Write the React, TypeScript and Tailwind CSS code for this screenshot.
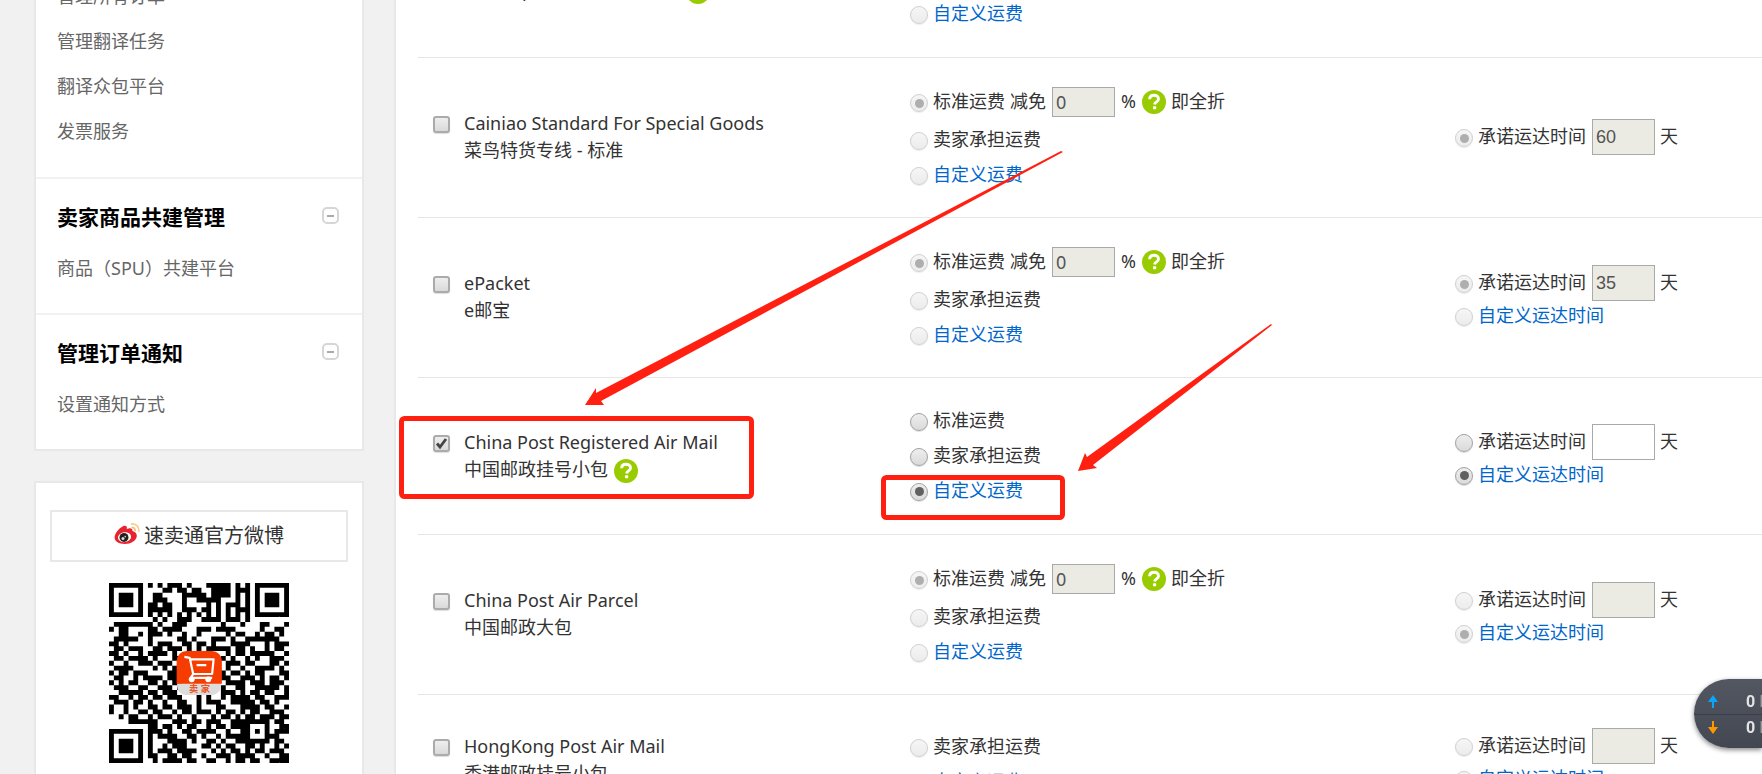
import React from "react";
import clsx from "clsx";

type Radio = {
  label: string;
  checked?: boolean;
  link?: boolean;
  discount?: string;
  days?: string;
};

type Method = {
  id: string;
  name: string;
  cnName: string;
  help?: boolean;
  active?: boolean;
  rowClass?: string;
  freightClass?: string;
  freight: Radio[];
  delivery: Radio[];
};

const standardFreight: Radio[] = [
  { label: "标准运费", checked: true, discount: "0" },
  { label: "卖家承担运费" },
  { label: "自定义运费", link: true },
];

const methods: Method[] = [
  {
    id: "tnt",
    name: "TNT Express",
    cnName: "TNT Express 全球快递服务",
    help: true,
    freight: standardFreight,
    delivery: [],
  },
  {
    id: "cainiao",
    name: "Cainiao Standard For Special Goods",
    cnName: "菜鸟特货专线 - 标准",
    freight: standardFreight,
    delivery: [{ label: "承诺运达时间", checked: true, days: "60" }],
  },
  {
    id: "epacket",
    name: "ePacket",
    cnName: "e邮宝",
    freight: standardFreight,
    delivery: [
      { label: "承诺运达时间", checked: true, days: "35" },
      { label: "自定义运达时间", link: true },
    ],
  },
  {
    id: "registered",
    name: "China Post Registered Air Mail",
    cnName: "中国邮政挂号小包",
    help: true,
    active: true,
    rowClass: "h-[157px]",
    freight: [
      { label: "标准运费" },
      { label: "卖家承担运费" },
      { label: "自定义运费", link: true, checked: true },
    ],
    delivery: [
      { label: "承诺运达时间", days: "" },
      { label: "自定义运达时间", link: true, checked: true },
    ],
  },
  {
    id: "parcel",
    name: "China Post Air Parcel",
    cnName: "中国邮政大包",
    freight: standardFreight,
    delivery: [
      { label: "承诺运达时间", days: "" },
      { label: "自定义运达时间", link: true, checked: true },
    ],
  },
  {
    id: "hongkong",
    name: "HongKong Post Air Mail",
    cnName: "香港邮政挂号小包",
    rowClass: "h-[132px]",
    freightClass: "pt-2",
    freight: [{ label: "卖家承担运费" }, { label: "自定义运费", link: true }],
    delivery: [
      { label: "承诺运达时间", days: "" },
      { label: "自定义运达时间", link: true },
    ],
  },
];

const qrRows = [
  "1111111010101110100011111010101111111",
  "1000001000011011011001111011101000001",
  "1011101001100001111101111010101011101",
  "1011101001110001001111100010101011101",
  "1011101011011001000010101110101011101",
  "1000001011111001110110101011101000001",
  "1111111010101010101010101010101111111",
  "0000000001010011100111101110100000000",
  "0111111110100111000000010001000110001",
  "1011000011011110001110111100000100110",
  "0011001011101001001000001011001011010",
  "0111110010000011010001110100111111100",
  "1101000010111001101101000111100010111",
  "0110111001101110101011111011010010110",
  "1101001011110100000000001011011111001",
  "0110111101000110000000010100101001110",
  "1001001110111000000000001110110001101",
  "0111100001010100000000001001001111010",
  "1011011100001110000000010110101100011",
  "0110010111101100000000011001110101101",
  "1010110011010110000000001111011101110",
  "0111001100111010000000010011001111101",
  "0011111011011100000000011101011011001",
  "1100101101101110001010010111101100111",
  "0111011010010011001011100111110110100",
  "1001010011011011101000110001111011001",
  "1001001101100101101110101101011001110",
  "0010110010111010010001011010110111011",
  "0000111111000111011011100111111110110",
  "0000000011011010110010110111100010011",
  "1111111011101001101111001001101010111",
  "1000001010111100110100101111100011100",
  "1011101010001111010011010011111110110",
  "1011101010010111000110101100110100101",
  "1011101010111011110001010110101101110",
  "1000001011001101100100111011110010011",
  "1111111001011110110011001011011001111",
];

// One unit square per black module; the centre stays free for the logo.
const qrPath = qrRows
  .map((row, y) =>
    row
      .split("")
      .map((cell, x) => (cell === "1" ? `M${x} ${y}h1v1h-1z` : ""))
      .join("")
  )
  .join("");

const QrCode = () => (
  <svg
    viewBox="0 0 37 37"
    className="size-[180px]"
    role="img"
    aria-label="QR code"
  >
    <path d={qrPath} fill="#000" />
    <path d="M14 20.6h9v.6a1.8 1.8 0 0 1-1.8 1.8h-5.4a1.8 1.8 0 0 1-1.8-1.8z" fill="#dcdcdc" />
    <path d="M16 14h5.2a2 2 0 0 1 2 2v4.7h-9.3V16a2 2 0 0 1 2-2z" fill="#f63c00" />
    <path
      d="M15.5 15.2l1.1.2.7 3.3h3.9l.3-3h-4.7M18 16.9h2M17.3 18.7l-.5.8h4.4"
      fill="none"
      stroke="#fff"
      strokeWidth=".45"
      strokeLinejoin="round"
    />
    <circle cx="17" cy="19.8" r=".6" fill="#fff" />
    <circle cx="20.4" cy="19.8" r=".6" fill="#fff" />
    <text
      x="18.6"
      y="22.5"
      fontSize="1.9"
      fontWeight="700"
      textAnchor="middle"
      fill="#f0521e"
    >
      卖 家
    </text>
  </svg>
);

const WeiboIcon = () => (
  <svg viewBox="0 0 27 22" className="mb-1 h-[22px] w-[27px]" aria-hidden="true">
    <path
      d="M9 3.200C11.500 2 13.500 3 12.800 6c3-1.300 6.200-1 5.600 2 2.700.8 4.600 2.400 4.400 5-.4 4.800-6 8-12 8C5 21 .6 18.600.6 14.600.6 10.500 4.800 5.200 9 3.200z"
      fill="#e6232f"
    />
    <ellipse cx="10.500" cy="14.200" rx="6.600" ry="4.900" fill="#fff" transform="rotate(-8 10.500 14.200)" />
    <circle cx="10" cy="14.400" r="4.500" fill="#222" />
    <circle cx="9" cy="15.600" r="1.500" fill="#ddd" />
    <circle cx="11.200" cy="13.600" r=".8" fill="#ddd" />
    <path d="M17.500 4.500c2.500-.4 4 1.200 3.500 3.700" fill="none" stroke="#f7b96b" strokeWidth="1.600" />
    <path d="M17 1c5.500-.8 8.600 3 7.600 8" fill="none" stroke="#fbd093" strokeWidth="1.800" />
  </svg>
);

const HelpIcon = ({ className }: { className?: string }) => (
  <button
    type="button"
    aria-label="帮助"
    className={clsx("size-6 shrink-0", className)}
  >
    <svg viewBox="0 0 24 24" className="size-6">
      <circle cx="12" cy="12" r="12" fill="#9c0" />
      <path
        d="M7.600 9.200c.1-2.700 1.900-4 4.400-4s4.500 1.400 4.500 3.700c0 3-3.600 2.900-3.900 5.600"
        fill="none"
        stroke="#fff"
        strokeWidth="2.900"
      />
      <rect x="11" y="16.200" width="3.200" height="3" rx=".6" fill="#fff" />
    </svg>
  </button>
);

const SidebarLink = ({ children }: { children: React.ReactNode }) => (
  <li>
    <a href="#" className="text-lg leading-[45px] text-[#666]">
      {children}
    </a>
  </li>
);

const SidebarSection = ({
  title,
  items,
}: {
  title: string;
  items: string[];
}) => (
  <section className="border-t-2 border-[#f1f1f1] pt-4 pr-[23px] pb-[22px] pl-[21px]">
    <div className="mb-1.5 flex h-[45px] items-center justify-between">
      <h3 className="text-[21px] font-bold text-black">{title}</h3>
      <button
        type="button"
        aria-label="收起"
        className="mb-1 flex size-[17px] items-center justify-center rounded-[5px] border-2 border-[#d6d6d6]"
      >
        <span className="h-0.5 w-[7px] bg-[#aaa]" />
      </button>
    </div>
    <ul>
      {items.map((item) => (
        <SidebarLink key={item}>{item}</SidebarLink>
      ))}
    </ul>
  </section>
);

const Sidebar = () => (
  <aside className="w-[330px] shrink-0">
    <nav className="-mt-7 border-2 border-[#e8e8e8] bg-white">
      <ul className="pb-[23px] pl-[21px]">
        <SidebarLink>管理所有订单</SidebarLink>
        <SidebarLink>管理翻译任务</SidebarLink>
        <SidebarLink>翻译众包平台</SidebarLink>
        <SidebarLink>发票服务</SidebarLink>
      </ul>
      <SidebarSection
        title="卖家商品共建管理"
        items={["商品（SPU）共建平台"]}
      />
      <SidebarSection title="管理订单通知" items={["设置通知方式"]} />
    </nav>

    <div className="mt-[30px] flex flex-col items-center border-2 border-[#e8e8e8] bg-white px-[14px] pt-[27px] pb-8">
      <a
        href="#"
        className="flex h-[52px] w-full items-center justify-center gap-[3px] border-2 border-[#e8e8e8] text-xl text-[#333]"
      >
        <WeiboIcon />
        速卖通官方微博
      </a>
      <div className="mt-[21px]">
        <QrCode />
      </div>
    </div>
  </aside>
);

const Checkbox = ({ id, checked }: { id: string; checked?: boolean }) => (
  <span className="relative mt-1.5 size-[17px] shrink-0">
    <input
      id={id}
      type="checkbox"
      defaultChecked={checked}
      className="block size-[17px] appearance-none rounded-[3px] border-2 border-[#ababab] bg-linear-to-b from-[#eee] to-[#dadada] shadow-[0_1px_1px_#ddd]"
    />
    {checked && (
      <svg
        viewBox="0 0 17 17"
        className="pointer-events-none absolute inset-0 size-[17px]"
      >
        <path d="M4 8.500l3 3.500 6-8" fill="none" stroke="#444" strokeWidth="2.800" />
      </svg>
    )}
  </span>
);

const RadioLine = ({
  id,
  group,
  item,
  enabled,
  lineClass,
}: {
  id: string;
  group: string;
  item: Radio;
  enabled?: boolean;
  lineClass: string;
}) => (
  <div className={clsx("flex items-center", lineClass)}>
    <input
      id={id}
      type="radio"
      name={group}
      defaultChecked={item.checked}
      disabled={!enabled}
      className="mt-0.5 mr-[5px] grid size-[18px] shrink-0 appearance-none place-content-center rounded-full border border-[#a3a3a3] bg-linear-to-b from-[#eee] to-[#dadada] shadow-[0_1px_1px_#ddd] before:size-[9px] before:rounded-full checked:before:bg-[#606060] disabled:opacity-50"
    />
    <label
      htmlFor={id}
      className={clsx("pb-0.5", item.link && "text-[#06c]")}
    >
      {item.link ? <a href="#">{item.label}</a> : item.label}
    </label>
    {item.discount !== undefined && (
      <>
        <label htmlFor={`${id}-off`} className="mr-1.5 ml-[5px] pb-0.5">
          减免
        </label>
        <input
          id={`${id}-off`}
          type="text"
          defaultValue={item.discount}
          disabled={!enabled}
          className="h-[30px] w-[63px] border border-[#a9a9a9] bg-white px-[3px] text-[#545454] disabled:bg-[#ebebe4]"
        />
        <span className="mr-1.5 ml-1.5 pb-0.5">%</span>
        <HelpIcon />
        <span className="ml-[5px] pb-0.5">即全折</span>
      </>
    )}
    {item.days !== undefined && (
      <>
        <input
          type="text"
          aria-label={item.label}
          defaultValue={item.days}
          disabled={!enabled}
          className="mr-[5px] ml-1.5 h-9 w-[63px] border border-[#a9a9a9] bg-white px-[3px] font-['Liberation_Sans',sans-serif] text-[#545454] disabled:bg-[#ebebe4]"
        />
        <span className="pb-0.5">天</span>
      </>
    )}
  </div>
);

const MethodRow = ({ method }: { method: Method }) => (
  <tr
    className={clsx(
      "border-b border-[#e6e6e6] align-middle",
      method.rowClass ?? "h-40"
    )}
  >
    <td>
      <div className="flex gap-[14px] pl-[15px]">
        <Checkbox id={method.id} checked={method.active} />
        <div className="leading-[27px]">
          <label htmlFor={method.id} className="block">
            {method.name}
          </label>
          <div className="flex h-[27px] items-center gap-1.5">
            {method.cnName}
            {method.help && <HelpIcon className="mt-1" />}
          </div>
        </div>
      </div>
    </td>
    <td>
      <div className={method.freightClass}>
        {method.freight.map((item, i) => (
          <RadioLine
            key={item.label}
            id={`${method.id}-freight-${i}`}
            group={`${method.id}-freight`}
            item={item}
            enabled={method.active}
            lineClass={item.discount !== undefined ? "h-10" : "h-[35px]"}
          />
        ))}
      </div>
    </td>
    <td>
      {method.delivery.map((item, i) => (
        <RadioLine
          key={item.label}
          id={`${method.id}-delivery-${i}`}
          group={`${method.id}-delivery`}
          item={item}
          enabled={method.active}
          lineClass={item.days !== undefined ? "h-[38px]" : "h-7"}
        />
      ))}
    </td>
  </tr>
);

const Annotations = () => (
  <svg
    className="pointer-events-none absolute top-0 left-0 h-[774px] w-[1762px]"
    viewBox="0 0 1762 774"
    aria-hidden="true"
  >
    <g fill="#ff2012">
      <path d="M1061 151l2 1L601 401l3 4-19 0 11-17 0 5z" />
      <path d="M1271 324l1 1L1093 465l4 3-19 3 7-18 2 4z" />
    </g>
    <g fill="none" stroke="#ff2012" strokeWidth="5">
      <rect x="401.500" y="418.500" width="350" height="78" rx="3" />
      <rect x="883.500" y="477.500" width="179" height="40" rx="3" />
    </g>
  </svg>
);

const SpeedWidget = () => (
  <div className="fixed right-0 bottom-[26px] flex h-[69px] w-[68px] flex-col overflow-hidden rounded-l-full bg-linear-to-b from-[#535761] to-[#434752] font-[Roboto,sans-serif] text-base font-bold text-[#e4e4e4] shadow-[0_2px_5px_#888]">
    <div className="flex flex-1 items-center gap-7 border-b border-[#3c3f49] pt-2.5 pl-[14px] whitespace-nowrap">
      <svg viewBox="0 0 10 13" className="h-[13px] w-2.5 shrink-0">
        <path d="M5 0l5 7H6v6H4V7H0z" fill="#0aa6fb" />
      </svg>
      <span>
        0 <span className="font-normal text-[#999]">K/s</span>
      </span>
    </div>
    <div className="flex flex-1 items-center gap-7 pb-2 pl-[14px] whitespace-nowrap">
      <svg viewBox="0 0 10 13" className="h-[13px] w-2.5 shrink-0">
        <path d="M5 13l5-7H6V0H4v6H0z" fill="#ff9800" />
      </svg>
      <span>
        0 <span className="font-normal text-[#999]">K/s</span>
      </span>
    </div>
  </div>
);

export default function App() {
  return (
    <div className="relative h-screen overflow-hidden bg-[#f1f1f1] font-['Noto_Sans','Noto_Sans_CJK_SC',sans-serif] text-lg text-[#333]">
      <div className="flex h-full gap-[30px] pl-[34px]">
        <Sidebar />
        <main className="min-w-0 flex-1 border-l-2 border-[#e8e8e8] bg-white pl-[22px]">
          <table className="-mt-[103px] w-full table-fixed border-collapse">
            <colgroup>
              <col className="w-[492px]" />
              <col className="w-[545px]" />
              <col />
            </colgroup>
            <tbody>
              {methods.map((method) => (
                <MethodRow key={method.id} method={method} />
              ))}
            </tbody>
          </table>
        </main>
      </div>
      <Annotations />
      <SpeedWidget />
    </div>
  );
}
